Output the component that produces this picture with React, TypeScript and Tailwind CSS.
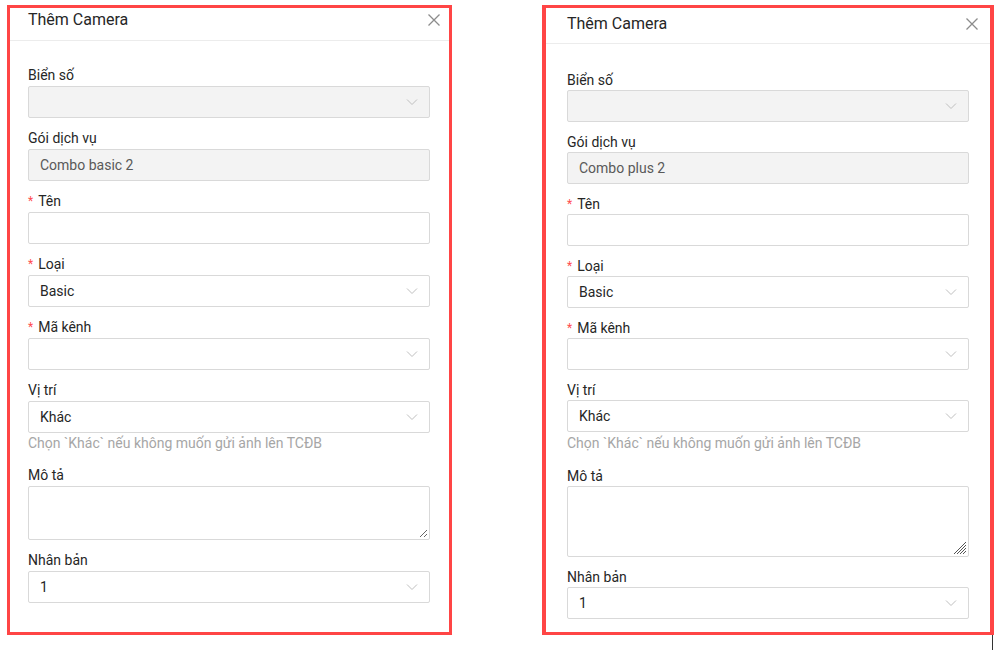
import React from "react";

type Panel = {
  service: string;
  headerClass: string;
  closeClass: string;
  fieldGap: string;
  labelClass: string;
  helperClass: string;
  textareaH: string;
  bigHandle: boolean;
  boxClass: string;
  bodyClass: string;
};

const Chevron = () => (
  <svg width="12" height="12" viewBox="0 0 12 12" className="absolute right-[11px] top-1/2 -translate-y-1/2">
    <path d="M1 3.5 L6 8.5 L11 3.5" fill="none" stroke="#bfbfbf" strokeWidth="1" />
  </svg>
);

const CloseIcon = () => (
  <svg width="12" height="12" viewBox="0 0 12 12">
    <path d="M0.5 0.5 L11.5 11.5 M11.5 0.5 L0.5 11.5" fill="none" stroke="#8c8c8c" strokeWidth="1.3" />
  </svg>
);

const Label = ({ text, required, cls }: { text: string; required?: boolean; cls: string }) => (
  <div className={"h-[23px] leading-[22px] text-[14px] text-[#262626] flex items-start " + cls}>
    {required && <span className="text-[#ff4d4f] text-[12px] mr-[5px] leading-[22px]">*</span>}
    <span>{text}</span>
  </div>
);

const Select = ({ value, disabled }: { value?: string; disabled?: boolean }) => (
  <div
    className={
      "relative h-[32px] border border-[#d9d9d9] rounded-[2px] px-[11px] flex items-center text-[14px] " +
      (disabled ? "bg-[#f3f3f3]" : "bg-white")
    }
  >
    <span className="text-[#262626]">{value}</span>
    <Chevron />
  </div>
);

const Modal = ({ p }: { p: Panel }) => (
  <div className={"bg-white border-[#ff4545] flex flex-col " + p.boxClass}>
    <div className={"flex justify-between border-b border-[#ececec] " + p.headerClass}>
      <div className="text-[16px] leading-[22px] text-[#262626]">Thêm Camera</div>
      <div className={p.closeClass}>
        <CloseIcon />
      </div>
    </div>
    <div className={p.bodyClass}>
      <div className={p.fieldGap}>
        <Label text="Biển số" cls={p.labelClass} />
        <Select disabled />
      </div>
      <div className={p.fieldGap}>
        <Label text="Gói dịch vụ" cls={p.labelClass} />
        <div className="h-[32px] border border-[#d9d9d9] rounded-[2px] px-[11px] flex items-center bg-[#f3f3f3] text-[14px] text-[#595959]">
          {p.service}
        </div>
      </div>
      <div className={p.fieldGap}>
        <Label text="Tên" required cls={p.labelClass} />
        <div className="h-[32px] border border-[#d9d9d9] rounded-[2px] bg-white" />
      </div>
      <div className={p.fieldGap}>
        <Label text="Loại" required cls={p.labelClass} />
        <Select value="Basic" />
      </div>
      <div className={p.fieldGap}>
        <Label text="Mã kênh" required cls={p.labelClass} />
        <Select />
      </div>
      <div>
        <Label text="Vị trí" cls={p.labelClass} />
        <Select value="Khác" />
        <div className={"text-[14px] leading-[18px] text-[#a6a6a6] " + p.helperClass + " " + p.fieldGap}>
          Chọn `Khác` nếu không muốn gửi ảnh lên TCĐB
        </div>
      </div>
      <div className={p.fieldGap}>
        <Label text="Mô tả" cls={p.labelClass} />
        <div className={"relative border border-[#d9d9d9] rounded-[2px] bg-white " + p.textareaH}>
          {p.bigHandle ? (
            <svg width="14" height="14" viewBox="0 0 14 14" className="absolute right-[1px] bottom-[1px]">
              <path d="M13 1 L1 13 M13 4 L4 13 M13 7 L7 13 M13 10 L10 13" stroke="#555" strokeWidth="1" />
            </svg>
          ) : (
            <svg width="10" height="10" viewBox="0 0 10 10" className="absolute right-[1px] bottom-[1px]">
              <path d="M9 2 L2 9 M9 6 L6 9" stroke="#666" strokeWidth="1" />
            </svg>
          )}
        </div>
      </div>
      <div>
        <Label text="Nhân bản" cls={p.labelClass} />
        <Select value="1" />
      </div>
    </div>
  </div>
);

const left: Panel = {
  service: "Combo basic 2",
  headerClass: "h-[33px] pt-[1px] pl-[18px] pr-[9px]",
  closeClass: "pt-[5px]",
  fieldGap: "mb-[8px]",
  labelClass: "pt-[1px]",
  helperClass: "pt-[1px] h-[22px]",
  textareaH: "h-[54px]",
  bigHandle: false,
  boxClass: "w-[445px] h-[630px] border-[3px] ml-[7px] mt-[5px]",
  bodyClass: "pt-[22px] pl-[18px] pr-[19px]",
};

const right: Panel = {
  service: "Combo plus 2",
  headerClass: "h-[36px] pt-[5px] pl-[21px] pr-[12px]",
  closeClass: "pt-[5px]",
  fieldGap: "mb-[7px]",
  labelClass: "pt-[2px]",
  helperClass: "pt-[2px] h-[24px]",
  textareaH: "h-[71px]",
  bigHandle: true,
  boxClass: "w-[452px] h-[630px] border-y-[3px] border-x-[4px]",
  bodyClass: "pt-[23px] px-[21px]",
};

export default function App() {
  return (
    <div className="w-[1000px] h-[650px] bg-white overflow-hidden flex items-start" style={{ fontFamily: "Roboto, 'Noto Sans', sans-serif" }}>
      <Modal p={left} />
      <div className="ml-[90px] mt-[5px] flex flex-col">
        <Modal p={right} />
        <div className="ml-[450px] w-px h-[15px] bg-[#333]" />
      </div>
    </div>
  );
}
